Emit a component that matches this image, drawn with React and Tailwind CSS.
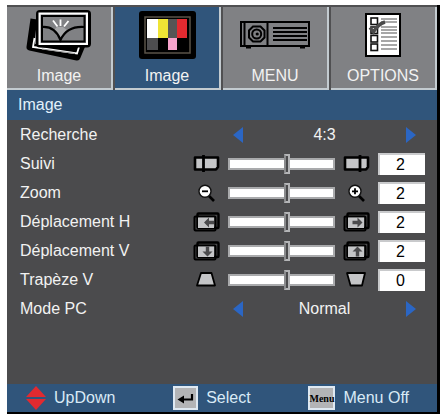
import React, { useState } from "react";

const ImageIcon = () => (
  <svg width="66" height="52" viewBox="29 9 66 52" aria-hidden="true">
    <path d="M37 19 L33 47 L80 57 L85 45" fill="none" stroke="#000" strokeWidth="7" strokeLinejoin="round" />
    <path d="M37 20 L38 44 L84 46 L80 57 L33 47 Z" fill="#000" />
    <path d="M37.5 38 L36 47 L80 53.5 L82 47" fill="none" stroke="#fff" strokeWidth="1.8" />
    <path d="M45 49 L78 53.5" stroke="#999" strokeWidth="1.2" />
    <rect x="39" y="10" width="55" height="37.5" rx="4" fill="#000" />
    <rect x="42.5" y="13.5" width="47.5" height="30.5" fill="#808184" stroke="#fff" strokeWidth="2" />
    <rect x="45" y="16" width="42.5" height="25.5" fill="#808184" stroke="#000" strokeWidth="2" />
    <path d="M57 30 L63 38 L70 30 L66 27 H60 Z" fill="#a5a6a8" />
    <path d="M45 27 Q58 26 63.5 40 Q70 26 87 27" fill="none" stroke="#000" strokeWidth="2.2" />
    <path d="M56 20.5 L60.5 26.5 M63.5 19.5 V26 M71.5 21 L67 26.5" stroke="#fff" strokeWidth="1.8" />
  </svg>
);

const ColorBarsIcon = () => (
  <svg width="57" height="48" viewBox="0 0 57 48" aria-hidden="true">
    <rect width="57" height="48" rx="3" fill="#000" />
    <rect x="6" y="6" width="45" height="36" fill="#000" stroke="#5a5348" strokeWidth="1.5" />
    <rect x="8" y="8" width="11" height="19" fill="#fff" />
    <rect x="19" y="8" width="10" height="19" fill="#efe435" />
    <rect x="29" y="8" width="9" height="19" fill="#555" />
    <rect x="38" y="8" width="10" height="19" fill="#e32a30" />
    <rect x="8" y="27" width="11" height="12" fill="#4d4d4f" />
    <rect x="29" y="27" width="9" height="12" fill="#f7a3cc" />
  </svg>
);

const ProjectorIcon = () => (
  <svg width="70" height="28" viewBox="0 0 70 28" aria-hidden="true">
    <g fill="none" stroke="#000" strokeWidth="2">
      <rect x="1" y="1" width="68" height="24" />
      <path d="M4.5 1 V25 M27.5 1 V25" />
      <path d="M13 5.5 H20.5 L24.5 9.5 V16.5 L20.5 20.5 H13 L9 16.5 V9.5 Z" />
      <circle cx="16.7" cy="13" r="4.5" />
      <path d="M33 7 H67 M33 11 H67 M33 15 H67 M33 19 H67" />
    </g>
    <circle cx="17.2" cy="13" r="1.6" />
    <path d="M6 25 H11 V27.5 H6 Z M60 25 H65 V27.5 H60 Z" />
  </svg>
);

const ChecklistIcon = () => (
  <svg width="36" height="44" viewBox="0 0 36 44" aria-hidden="true">
    <rect x="1" y="1" width="34" height="42" fill="#fff" stroke="#000" strokeWidth="2" />
    <path
      d="M16 6 H32 M16 9 H32 M16 14 H32 M16 17 H32 M16 20 H32 M16 24 H32 M16 28 H32 M16 32 H32 M16 36 H32"
      stroke="#8b8b8b"
      strokeWidth="1.5"
    />
    <g fill="#fff" stroke="#111" strokeWidth="1.6">
      <rect x="6" y="5" width="6.5" height="6.5" />
      <rect x="6" y="14" width="6.5" height="6.5" />
      <rect x="6" y="22.5" width="6.5" height="6.5" />
      <rect x="6" y="31" width="6.5" height="6.5" />
    </g>
    <path d="M5 14.5 L8.5 19 Q13 11 20 9" fill="none" stroke="#4a4a4a" strokeWidth="3.4" />
  </svg>
);

const TrackingIcon = ({ right }) => (
  <svg width="27" height="17" viewBox="0 0 27 17" aria-hidden="true">
    <path
      d="M2 2.500 H25 V12 L23 14.500 H2 Z"
      fill="#c4c5c7"
      stroke="#000"
      strokeWidth="2.6"
      strokeLinejoin="round"
    />
    <path d={right ? "M17 0 V17" : "M10.5 0 V17"} stroke="#000" strokeWidth="2.8" />
  </svg>
);

const MagnifierIcon = ({ plus }) => (
  <svg width="27" height="18" viewBox="0 0 27 18" aria-hidden="true">
    <path d="M15.5 11.5 L21 17" stroke="#000" strokeWidth="2.6" />
    <circle cx="12" cy="7.3" r="6" fill="#fff" stroke="#111" strokeWidth="1.4" />
    <path d={plus ? "M9 7.3 H15 M12 4.3 V10.3" : "M9 7.3 H15"} stroke="#000" strokeWidth="1.8" />
  </svg>
);

const shiftAngles = { right: 0, down: 90, left: 180, up: 270 };

const ShiftIcon = ({ direction }) => (
  <svg width="27" height="20" viewBox="0 0 27 20" aria-hidden="true">
    <rect x="4.5" y="1.500" width="21" height="14.500" rx="1" fill="#4a4a4b" stroke="#000" strokeWidth="2.4" />
    <rect x="1.5" y="4.5" width="21" height="14" rx="1" fill="none" stroke="#000" strokeWidth="2" />
    <rect x="5" y="5.500" width="16" height="10.500" fill="#c4c5c7" />
    <path
      d="M-5 -1.7 H0 V-5 L5 0 L0 5 V1.7 H-5 Z"
      fill="#4b4b4d"
      transform={`translate(${direction === "left" ? 16 : 14.5} 10.5) rotate(${shiftAngles[direction]})`}
    />
  </svg>
);

const KeystoneIcon = ({ flipped }) => (
  <svg width="27" height="15" viewBox="0 0 27 15" aria-hidden="true">
    <path
      d={flipped ? "M4 1 H22 L19 13.5 H7.5 Z" : "M8 1 H18.5 L22 13.5 H4 Z"}
      fill="#c4c5c7"
      stroke="#000"
      strokeWidth="1.8"
      strokeLinejoin="round"
    />
  </svg>
);

const tabs = [
  { id: "image", label: "Image", icon: <ImageIcon /> },
  { id: "display", label: "Image", icon: <ColorBarsIcon /> },
  { id: "menu", label: "MENU", icon: <ProjectorIcon /> },
  { id: "options", label: "OPTIONS", icon: <ChecklistIcon /> },
];

const SliderRow = ({ id, label, initial, before, after }) => {
  const [value, setValue] = useState(initial);

  return (
    <div className="flex h-[29px] items-center gap-2">
      <label htmlFor={id} className="flex-1">
        {label}
      </label>
      {before}
      <input
        id={id}
        type="range"
        min={initial - 56}
        max={initial + 45}
        value={value}
        onChange={(e) => setValue(Number(e.target.value))}
        className="h-3 w-[107px] appearance-none border-2 border-[#a9aaac] bg-white [&::-webkit-slider-thumb]:h-5 [&::-webkit-slider-thumb]:w-[6px] [&::-webkit-slider-thumb]:appearance-none [&::-webkit-slider-thumb]:border-2 [&::-webkit-slider-thumb]:border-[#b4b5b7] [&::-webkit-slider-thumb]:border-l-[#8a8b8d] [&::-webkit-slider-thumb]:bg-[#4b4b4d]"
      />
      {after}
      <input
        type="text"
        aria-label={`${label} valeur`}
        value={value}
        onChange={(e) => setValue(Number(e.target.value) || 0)}
        className="h-[22px] w-[47px] border-t-2 border-l-2 border-[#c9cacc] bg-white pr-1 text-center text-black"
      />
    </div>
  );
};

const ChoiceRow = ({ label, options }) => {
  const [index, setIndex] = useState(0);

  const step = (delta) => {
    setIndex((index + delta + options.length) % options.length);
  };

  return (
    <div className="flex h-[29px] items-center">
      <span className="flex-1">{label}</span>
      <div className="flex w-[197px] items-center justify-between pr-[9px] pl-[5px]">
        <button type="button" aria-label={`${label} précédent`} onClick={() => step(-1)}>
          <svg width="10" height="16" viewBox="0 0 10 16" className="block">
            <path d="M10 0 V16 L0 8 Z" fill="#2b66c4" />
          </svg>
        </button>
        <span>{options[index]}</span>
        <button type="button" aria-label={`${label} suivant`} onClick={() => step(1)}>
          <svg width="10" height="16" viewBox="0 0 10 16" className="block">
            <path d="M0 0 V16 L10 8 Z" fill="#2b66c4" />
          </svg>
        </button>
      </div>
    </div>
  );
};

const App = () => {
  const [activeTab, setActiveTab] = useState("display");

  return (
    <div className="bg-white pt-[5px] pb-[2px] pl-[7px] font-['Liberation_Sans',sans-serif] text-base text-[#f2f2f2]">
      <main className="border-r-[3px] border-b-2 border-black bg-[#4b4b4d]">
        {/* Tabs */}
        <nav className="flex gap-[2px] bg-[#505052] pt-[2px]">
          {tabs.map((tab) => (
            <button
              key={tab.id}
              type="button"
              onClick={() => setActiveTab(tab.id)}
              className={`flex flex-1 basis-0 flex-col items-center border-r-2 border-b-2 border-[#c3cbd0] ${
                activeTab === tab.id ? "bg-[#30557b]" : "bg-[#808184]"
              }`}
            >
              <span className="flex h-14 items-center">{tab.icon}</span>
              <span className="h-[25px] leading-[26px]">{tab.label}</span>
            </button>
          ))}
        </nav>

        <h1 className="h-[30px] bg-[#30557b] pl-[11px] leading-[30px] text-[#e3f1fa]">
          Image
        </h1>

        {/* Settings */}
        <section className="pr-3 pb-[61px] pl-[13px]">
          <ChoiceRow label="Recherche" options={["4:3", "16:9"]} />
          <SliderRow
            id="tracking"
            label="Suivi"
            initial={2}
            before={<TrackingIcon />}
            after={<TrackingIcon right />}
          />
          <SliderRow
            id="zoom"
            label="Zoom"
            initial={2}
            before={<MagnifierIcon />}
            after={<MagnifierIcon plus />}
          />
          <SliderRow
            id="shift-h"
            label="Déplacement H"
            initial={2}
            before={<ShiftIcon direction="left" />}
            after={<ShiftIcon direction="right" />}
          />
          <SliderRow
            id="shift-v"
            label="Déplacement V"
            initial={2}
            before={<ShiftIcon direction="down" />}
            after={<ShiftIcon direction="up" />}
          />
          <SliderRow
            id="keystone"
            label="Trapèze V"
            initial={0}
            before={<KeystoneIcon />}
            after={<KeystoneIcon flipped />}
          />
          <ChoiceRow label="Mode PC" options={["Normal", "Large"]} />
        </section>

        {/* Key legend */}
        <footer className="flex h-7 items-center justify-between bg-[#30557b] pr-7 pl-[19px] text-[#d9eaf6]">
          <div className="flex items-center gap-2">
            <svg width="20" height="24" viewBox="0 0 20 24" aria-hidden="true">
              <path d="M10 0 L20 11 H0 Z M0 13 H20 L10 24 Z" fill="#e12a30" />
            </svg>
            <span>UpDown</span>
          </div>
          <div className="flex items-center gap-2">
            <svg width="25" height="24" viewBox="0 0 25 24" aria-hidden="true">
              <rect x="1" y="1" width="23" height="22" fill="#b3b4b6" stroke="#dfe9f2" strokeWidth="2" />
              <path d="M19 8 V13.5 H9" fill="none" stroke="#000" strokeWidth="2.2" />
              <path d="M4.500 13.500 L11 9.500 V17.500 Z" />
            </svg>
            <span>Select</span>
          </div>
          <div className="flex items-center gap-2">
            <span className="flex h-6 w-[27px] items-center justify-center border-2 border-[#dfe9f2] bg-[#b3b4b6] font-['Liberation_Serif',serif] text-[10px] font-bold text-black">
              Menu
            </span>
            <span>Menu Off</span>
          </div>
        </footer>
      </main>
    </div>
  );
};

export default App;
